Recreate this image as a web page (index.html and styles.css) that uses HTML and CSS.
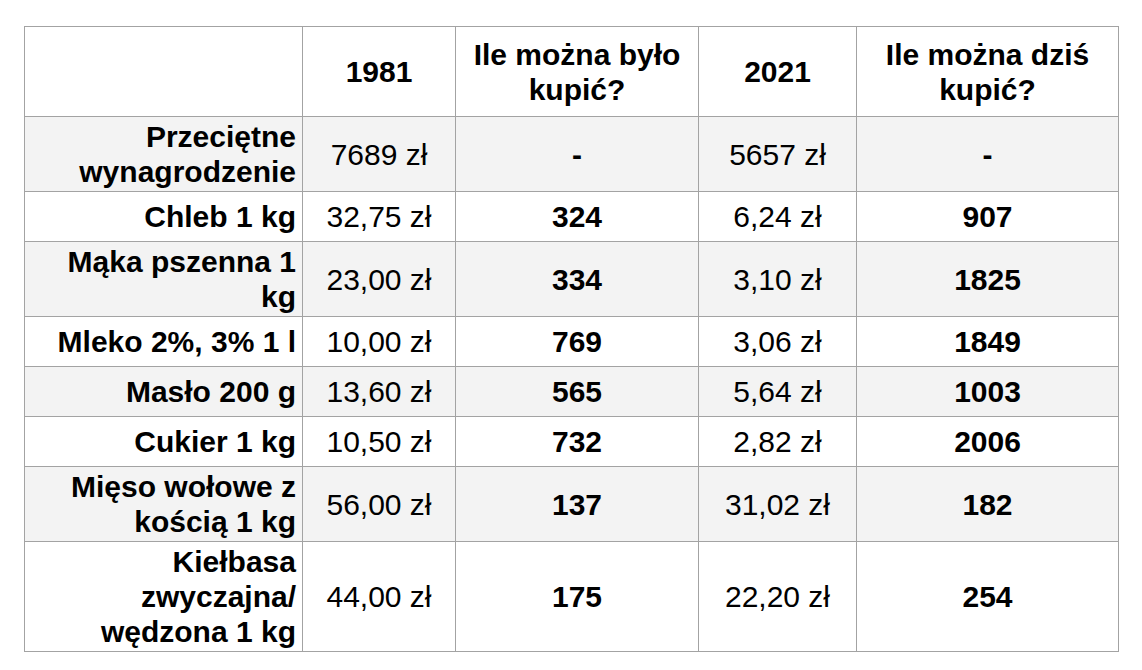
FILE: index.html
```html
<!DOCTYPE html>
<html lang="pl">
<head>
    <meta charset="UTF-8">
    <meta name="viewport" content="width=device-width, initial-scale=1.0">
    <title>Ceny 1981 i 2021</title>
    <link rel="stylesheet" href="styles.css">
</head>
<body>
    <table class="prices">
        <colgroup>
            <col class="col-name">
            <col class="col-price1">
            <col class="col-count1">
            <col class="col-price2">
            <col class="col-count2">
        </colgroup>
        <thead>
            <tr>
                <th></th>
                <th>1981</th>
                <th>Ile można było<br>kupić?</th>
                <th>2021</th>
                <th>Ile można dziś<br>kupić?</th>
            </tr>
        </thead>
        <tbody>
            <tr class="shade">
                <td class="name">Przeciętne<br>wynagrodzenie</td>
                <td>7689 zł</td>
                <td class="count">-</td>
                <td>5657 zł</td>
                <td class="count">-</td>
            </tr>
            <tr>
                <td class="name">Chleb 1 kg</td>
                <td>32,75 zł</td>
                <td class="count">324</td>
                <td>6,24 zł</td>
                <td class="count">907</td>
            </tr>
            <tr class="shade">
                <td class="name">Mąka pszenna 1<br>kg</td>
                <td>23,00 zł</td>
                <td class="count">334</td>
                <td>3,10 zł</td>
                <td class="count">1825</td>
            </tr>
            <tr>
                <td class="name">Mleko 2%, 3% 1 l</td>
                <td>10,00 zł</td>
                <td class="count">769</td>
                <td>3,06 zł</td>
                <td class="count">1849</td>
            </tr>
            <tr class="shade">
                <td class="name">Masło 200 g</td>
                <td>13,60 zł</td>
                <td class="count">565</td>
                <td>5,64 zł</td>
                <td class="count">1003</td>
            </tr>
            <tr>
                <td class="name">Cukier 1 kg</td>
                <td>10,50 zł</td>
                <td class="count">732</td>
                <td>2,82 zł</td>
                <td class="count">2006</td>
            </tr>
            <tr class="shade">
                <td class="name">Mięso wołowe z<br>kością 1 kg</td>
                <td>56,00 zł</td>
                <td class="count">137</td>
                <td>31,02 zł</td>
                <td class="count">182</td>
            </tr>
            <tr>
                <td class="name">Kiełbasa<br>zwyczajna/<br>wędzona 1 kg</td>
                <td>44,00 zł</td>
                <td class="count">175</td>
                <td>22,20 zł</td>
                <td class="count">254</td>
            </tr>
        </tbody>
    </table>
</body>
</html>
```

FILE: styles.css
```css
body {
    margin: 0;
    padding: 0;
    background-color: #fff;
    font-family: "Liberation Sans", Arial, sans-serif;
    color: #000;
}
.prices {
    margin: 26px 0 0 24px;
    border-collapse: collapse;
    table-layout: fixed;
    width: 1094px;
    font-size: 30px;
    line-height: 35px;
}
.col-name { width: 278px; }
.col-price1 { width: 153px; }
.col-count1 { width: 243px; }
.col-price2 { width: 158px; }
.col-count2 { width: 262px; }

.prices th,
.prices td {
    border: 1px solid #a3a3a3;
    padding: 2px 6px;
    text-align: center;
    vertical-align: middle;
}
.prices thead tr {
    height: 90px;
}
.prices th {
    font-weight: bold;
}
.prices tbody tr {
    height: 50px;
}
.prices tr.shade {
    background-color: #f3f3f3;
}
.prices td.name {
    text-align: right;
    font-weight: bold;
}
.prices td.count {
    font-weight: bold;
}
```
